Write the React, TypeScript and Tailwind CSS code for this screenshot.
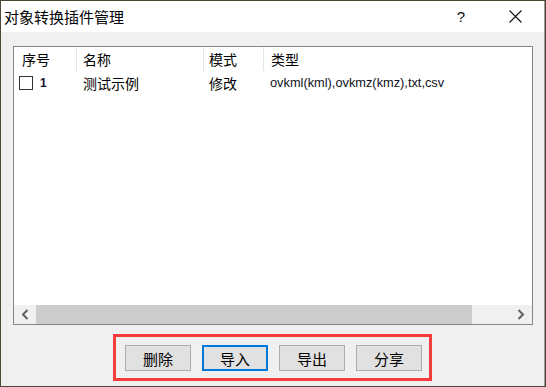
const columns = [
  { label: "序号", width: "w-[62px]", pad: "pl-[8px]" },
  { label: "名称", width: "w-[127px]", pad: "pl-[6px]" },
  { label: "模式", width: "w-[60px]", pad: "pl-[5px]" },
  { label: "类型", width: "flex-1", pad: "pl-[7px]" },
];

const buttons = ["删除", "导入", "导出", "分享"];

const cjk = "font-['Microsoft_YaHei','Noto_Sans_CJK_SC',sans-serif]";

const Chevron = ({ dir }: { dir: "left" | "right" }) => (
  <svg width="8" height="11" viewBox="0 0 8 11">
    <path
      d={dir === "left" ? "M6.5 1 L2 5.5 L6.5 10" : "M1.5 1 L6 5.5 L1.5 10"}
      fill="none"
      stroke="#606060"
      strokeWidth="2"
    />
  </svg>
);

export default function App() {
  return (
    <div className="w-[546px] h-[387px] bg-[#4d4637] pt-px pl-px">
      <div className={`w-[544px] h-[385px] bg-[#f0f0f0] border-r border-[#9a9a9a] flex flex-col ${cjk}`}>
        {/* TITLE BAR */}
        <div className="h-[31px] bg-white flex items-center shrink-0">
          <span className="pl-[3px] text-[15px] leading-none text-black">对象转换插件管理</span>
          <span className="ml-auto mr-[44px] text-[15px] leading-none font-['Liberation_Sans',sans-serif] text-[#111]">?</span>
          <svg width="13" height="13" viewBox="0 0 13 13" className="mr-[22px]">
            <path d="M0.5 0.5 L12.5 12.5 M12.5 0.5 L0.5 12.5" stroke="#111" strokeWidth="1.1" />
          </svg>
        </div>

        {/* LIST */}
        <div className="mt-[14px] ml-[12px] w-[520px] h-[279px] border border-[#828790] bg-white flex flex-col">
          <div className="h-[24px] flex text-[14px] text-black">
            {columns.map((c, i) => (
              <div
                key={c.label}
                className={`${c.width} ${c.pad} flex items-center leading-none ${i > 0 ? "border-l border-[#e5e5e5]" : ""}`}
              >
                {c.label}
              </div>
            ))}
          </div>
          <div className="h-[24px] flex text-[14px] text-black">
            <div className="w-[62px] pl-[5px] flex items-center">
              <span className="w-[14px] h-[14px] border border-[#333] bg-white" />
              <span className="ml-[7px] text-[12px] font-semibold font-['Liberation_Sans',sans-serif] text-[#101030]">1</span>
            </div>
            <div className="w-[127px] pl-[7px] flex items-center leading-none">测试示例</div>
            <div className="w-[60px] pl-[6px] flex items-center leading-none">修改</div>
            <div className="flex-1 pl-[7px] flex items-center text-[12.8px] font-['Liberation_Sans',sans-serif] text-[#101020]">
              ovkml(kml),ovkmz(kmz),txt,csv
            </div>
          </div>
          <div className="flex-1" />
          {/* H SCROLLBAR */}
          <div className="h-[19px] bg-[#f0f0f0] flex items-center">
            <div className="w-[22px] h-full flex items-center justify-center">
              <Chevron dir="left" />
            </div>
            <div className="w-[436px] h-full bg-[#cdcdcd]" />
            <div className="flex-1" />
            <div className="w-[22px] h-full flex items-center justify-center">
              <Chevron dir="right" />
            </div>
          </div>
        </div>

        {/* BUTTONS */}
        <div className="mt-[9px] self-center w-[319px] h-[47px] border-[3px] border-[#f53b3b] flex items-center gap-[11px] pl-[9px] pt-px">
          {buttons.map((b, i) => (
            <button
              key={b}
              className={`w-[66px] h-[26px] bg-[#e1e1e1] text-[15px] leading-none text-black flex items-center justify-center ${
                i === 1 ? "border-2 border-[#0078d7]" : "border border-[#adadad]"
              }`}
            >
              {b}
            </button>
          ))}
        </div>
      </div>
    </div>
  );
}
